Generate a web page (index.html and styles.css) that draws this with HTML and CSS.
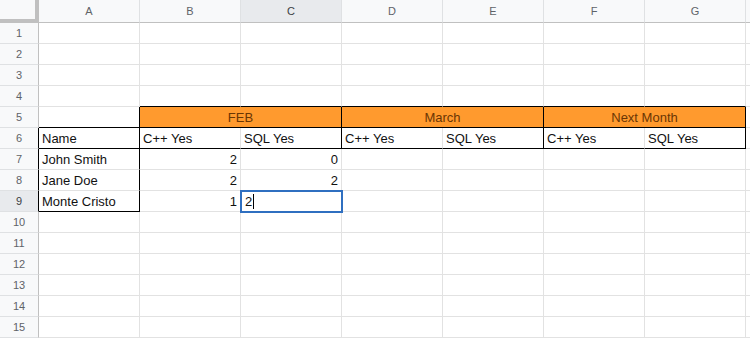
FILE: index.html
```html
<!DOCTYPE html>
<html lang="en">
<head>
  <meta charset="UTF-8" />
  <title>Sheet</title>
  <link rel="stylesheet" href="styles.css">
</head>
<body>

  <div class="sheet">
    <!-- COLUMN HEADERS -->
    <div class="corner"></div>
    <div class="col-head">A</div>
    <div class="col-head">B</div>
    <div class="col-head sel-col">C</div>
    <div class="col-head">D</div>
    <div class="col-head">E</div>
    <div class="col-head">F</div>
    <div class="col-head">G</div>
    <div class="col-head"></div>

    <!-- ROW 1-3 -->
    <div class="row-head">1</div>
    <div class="cell"></div><div class="cell"></div><div class="cell"></div><div class="cell"></div>
    <div class="cell"></div><div class="cell"></div><div class="cell"></div><div class="cell"></div>

    <div class="row-head">2</div>
    <div class="cell"></div><div class="cell"></div><div class="cell"></div><div class="cell"></div>
    <div class="cell"></div><div class="cell"></div><div class="cell"></div><div class="cell"></div>

    <div class="row-head">3</div>
    <div class="cell"></div><div class="cell"></div><div class="cell"></div><div class="cell"></div>
    <div class="cell"></div><div class="cell"></div><div class="cell"></div><div class="cell"></div>

    <!-- ROW 4 (black line under B..G) -->
    <div class="row-head">4</div>
    <div class="cell"></div>
    <div class="cell bb"></div><div class="cell bb"></div><div class="cell bb"></div>
    <div class="cell bb"></div><div class="cell bb"></div><div class="cell bb"></div>
    <div class="cell"></div>

    <!-- ROW 5: month titles -->
    <div class="row-head">5</div>
    <div class="cell br bb"></div>
    <div class="cell span2 orange br bb">FEB</div>
    <div class="cell span2 orange br bb">March</div>
    <div class="cell span2 orange br bb">Next Month</div>
    <div class="cell"></div>

    <!-- ROW 6: column titles -->
    <div class="row-head edge">6</div>
    <div class="cell br bb">Name</div>
    <div class="cell bb">C++ Yes</div>
    <div class="cell br bb">SQL Yes</div>
    <div class="cell bb">C++ Yes</div>
    <div class="cell br bb">SQL Yes</div>
    <div class="cell bb">C++ Yes</div>
    <div class="cell br bb">SQL Yes</div>
    <div class="cell"></div>

    <!-- ROW 7-9: data -->
    <div class="row-head edge">7</div>
    <div class="cell br">John Smith</div>
    <div class="cell num">2</div>
    <div class="cell num">0</div>
    <div class="cell"></div><div class="cell"></div><div class="cell"></div><div class="cell"></div><div class="cell"></div>

    <div class="row-head edge">8</div>
    <div class="cell br">Jane Doe</div>
    <div class="cell num">2</div>
    <div class="cell num">2</div>
    <div class="cell"></div><div class="cell"></div><div class="cell"></div><div class="cell"></div><div class="cell"></div>

    <div class="row-head edge sel-row">9</div>
    <div class="cell br bb">Monte Cristo</div>
    <div class="cell num">1</div>
    <div class="cell editing"><span class="caret">2</span></div>
    <div class="cell"></div><div class="cell"></div><div class="cell"></div><div class="cell"></div><div class="cell"></div>

    <!-- ROW 10-15 -->
    <div class="row-head">10</div>
    <div class="cell"></div><div class="cell"></div><div class="cell"></div><div class="cell"></div>
    <div class="cell"></div><div class="cell"></div><div class="cell"></div><div class="cell"></div>

    <div class="row-head">11</div>
    <div class="cell"></div><div class="cell"></div><div class="cell"></div><div class="cell"></div>
    <div class="cell"></div><div class="cell"></div><div class="cell"></div><div class="cell"></div>

    <div class="row-head">12</div>
    <div class="cell"></div><div class="cell"></div><div class="cell"></div><div class="cell"></div>
    <div class="cell"></div><div class="cell"></div><div class="cell"></div><div class="cell"></div>

    <div class="row-head">13</div>
    <div class="cell"></div><div class="cell"></div><div class="cell"></div><div class="cell"></div>
    <div class="cell"></div><div class="cell"></div><div class="cell"></div><div class="cell"></div>

    <div class="row-head">14</div>
    <div class="cell"></div><div class="cell"></div><div class="cell"></div><div class="cell"></div>
    <div class="cell"></div><div class="cell"></div><div class="cell"></div><div class="cell"></div>

    <div class="row-head">15</div>
    <div class="cell"></div><div class="cell"></div><div class="cell"></div><div class="cell"></div>
    <div class="cell"></div><div class="cell"></div><div class="cell"></div><div class="cell"></div>
  </div>

</body>
</html>
```

FILE: styles.css
```css
/* BASIC RESET */
* {
  margin: 0;
  padding: 0;
  box-sizing: border-box;
}
body {
  font-family: "Liberation Sans", Arial, sans-serif;
  background: #fff;
  color: #000;
  overflow: hidden;
}

/* GRID */
.sheet {
  display: grid;
  grid-template-columns: 39px repeat(7, 101px) 1fr;
  grid-template-rows: 23px;
  grid-auto-rows: 21px;
  width: 750px;
}

/* HEADERS */
.corner {
  background: #f8f9fa;
  border-right: 4px solid #c0c0c0;
  border-bottom: 4px solid #c0c0c0;
}
.col-head {
  background: #f8f9fa;
  border-right: 1px solid #dfe1e3;
  border-bottom: 1px solid #c0c0c0;
  color: #5f6368;
  font-size: 11px;
  line-height: 22px;
  text-align: center;
}
.row-head {
  background: #f8f9fa;
  border-right: 1px solid #c0c0c0;
  border-bottom: 1px solid #dfe1e3;
  color: #5f6368;
  font-size: 11px;
  line-height: 20px;
  text-align: center;
}
.sel-col,
.sel-row {
  background: #e8eaed;
  color: #3c4043;
}
.row-head.edge {
  border-right-color: #000;
}

/* CELLS */
.cell {
  border-right: 1px solid #e2e2e2;
  border-bottom: 1px solid #e2e2e2;
  color: #111;
  font-size: 13px;
  line-height: 20px;
  padding: 1px 3px 0;
  white-space: nowrap;
  overflow: hidden;
}
.span2 {
  grid-column: span 2;
}
.orange {
  background: #ff9a2e;
  color: #6a3604;
  text-align: center;
}
.num {
  text-align: right;
}
.bb {
  border-bottom-color: #000;
}
.br {
  border-right-color: #000;
}

/* ACTIVE CELL */
.editing {
  outline: 2px solid #2f6fc0;
  outline-offset: -1px;
  position: relative;
  z-index: 1;
  padding-left: 4px;
}
.caret {
  border-right: 1px solid #000;
  padding-right: 1px;
}
```
